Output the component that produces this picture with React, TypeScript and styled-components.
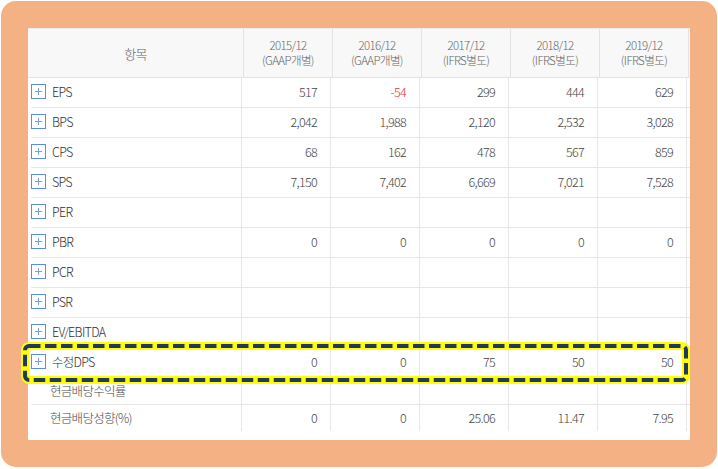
import React from "react"
import styled, { createGlobalStyle } from "styled-components"

const GlobalStyle = createGlobalStyle`
  html, body {
    margin: 0;
    padding: 0;
    background: #fff;
  }
  * {
    box-sizing: border-box;
  }
`

const FONT = `"Nanum Gothic", "Noto Sans CJK KR", "Noto Sans", sans-serif`

const Frame = styled.div`
  position: relative;
  width: 716px;
  height: 466px;
  margin: 1px;
  padding: 27px;
  background: #f4b183;
  border-radius: 15px;
  font-family: ${FONT};
`

const Panel = styled.div`
  width: 662px;
  height: 412px;
  background: #fff;
  overflow: hidden;
`

const HeadRow = styled.div`
  display: grid;
  grid-template-columns: 216px repeat(5, 89px);
  height: 50px;
  background: #f8f8f8;
  border-top: 1px solid #ececec;
  border-bottom: 1px solid #e3e3e3;
`

const HeadCell = styled.div<{ $big?: boolean }>`
  display: flex;
  flex-direction: column;
  align-items: center;
  justify-content: center;
  border-right: 1px solid #e3e3e3;
  color: #666;
  font-size: ${({ $big }) => ($big ? "13px" : "11.5px")};
  font-weight: 300;
  line-height: 15px;
  letter-spacing: -0.6px;
  text-align: center;
`

const Body = styled.div`
  margin-left: 3px;
`

const Row = styled.div<{ $h: number; $last?: boolean }>`
  display: grid;
  grid-template-columns: 211px repeat(5, 89px);
  height: ${({ $h }) => $h}px;
  border-bottom: ${({ $last }) => ($last ? "none" : "1px solid #e6e6e6")};
`

const LabelCell = styled.div<{ $sub?: boolean }>`
  display: flex;
  align-items: center;
  gap: 6px;
  padding-left: ${({ $sub }) => ($sub ? "19px" : "0")};
  padding-bottom: 2px;
  border-right: 1px solid #e6e6e6;
  color: ${({ $sub }) => ($sub ? "#4a4a4a" : "#2e2e2e")};
  font-size: 12.5px;
  font-weight: 300;
  letter-spacing: -0.7px;
  white-space: nowrap;
`

const NumCell = styled.div<{ $neg?: boolean }>`
  display: flex;
  align-items: center;
  justify-content: flex-end;
  padding-right: 13px;
  padding-bottom: 2px;
  border-right: 1px solid #e6e6e6;
  color: ${({ $neg }) => ($neg ? "#f03030" : "#444")};
  font-size: 12.5px;
  font-weight: 300;
  letter-spacing: -0.7px;
`

const PlusBox = styled.span`
  position: relative;
  flex: none;
  width: 15px;
  height: 15px;
  border: 1px solid #5a8de8;
  background: #fff;
  &::before,
  &::after {
    content: "";
    position: absolute;
    background: #6f9ff0;
  }
  &::before {
    left: 3px;
    top: 6px;
    width: 7px;
    height: 1px;
  }
  &::after {
    left: 6px;
    top: 3px;
    width: 1px;
    height: 7px;
  }
`

const Highlight = styled.svg`
  position: absolute;
  left: 20px;
  top: 341px;
  width: 669px;
  height: 42px;
  overflow: visible;
  pointer-events: none;
`

type Item = {
  label: string
  values: string[]
  sub?: boolean
  h?: number
}

const headers = [
  ["2015/12", "(GAAP개별)"],
  ["2016/12", "(GAAP개별)"],
  ["2017/12", "(IFRS별도)"],
  ["2018/12", "(IFRS별도)"],
  ["2019/12", "(IFRS별도)"],
]

const empty = ["", "", "", "", ""]

const items: Item[] = [
  { label: "EPS", values: ["517", "-54", "299", "444", "629"] },
  { label: "BPS", values: ["2,042", "1,988", "2,120", "2,532", "3,028"] },
  { label: "CPS", values: ["68", "162", "478", "567", "859"] },
  { label: "SPS", values: ["7,150", "7,402", "6,669", "7,021", "7,528"] },
  { label: "PER", values: empty },
  { label: "PBR", values: ["0", "0", "0", "0", "0"] },
  { label: "PCR", values: empty },
  { label: "PSR", values: empty },
  { label: "EV/EBITDA", values: empty },
  { label: "수정DPS", values: ["0", "0", "75", "50", "50"] },
  { label: "현금배당수익률", values: empty, sub: true, h: 27 },
  { label: "현금배당성향(%)", values: ["0", "0", "25.06", "11.47", "7.95"], sub: true, h: 26 },
]

export default function App() {
  return (
    <>
      <GlobalStyle />
      <Frame>
        <Panel>
          <HeadRow>
            <HeadCell $big>항목</HeadCell>
            {headers.map(([y, t]) => (
              <HeadCell key={y}>
                <span>{y}</span>
                <span>{t}</span>
              </HeadCell>
            ))}
          </HeadRow>
          <Body>
            {items.map((it, i) => (
              <Row key={it.label} $h={it.h ?? 30} $last={i === items.length - 1}>
                <LabelCell $sub={it.sub}>
                  {!it.sub && <PlusBox />}
                  {it.label}
                </LabelCell>
                {it.values.map((v, j) => (
                  <NumCell key={j} $neg={v.startsWith("-")}>
                    {v}
                  </NumCell>
                ))}
              </Row>
            ))}
          </Body>
        </Panel>
        {/* 수정DPS 강조 표시 */}
        <Highlight viewBox="0 0 669 42">
          <rect x="4" y="4" width="661" height="34" rx="4" fill="none" stroke="#ffff00" strokeWidth="8" />
          <rect x="4" y="4" width="661" height="34" rx="4" fill="none" stroke="#1f3864" strokeWidth="4" strokeDasharray="11.5 4.5" />
        </Highlight>
      </Frame>
    </>
  )
}
